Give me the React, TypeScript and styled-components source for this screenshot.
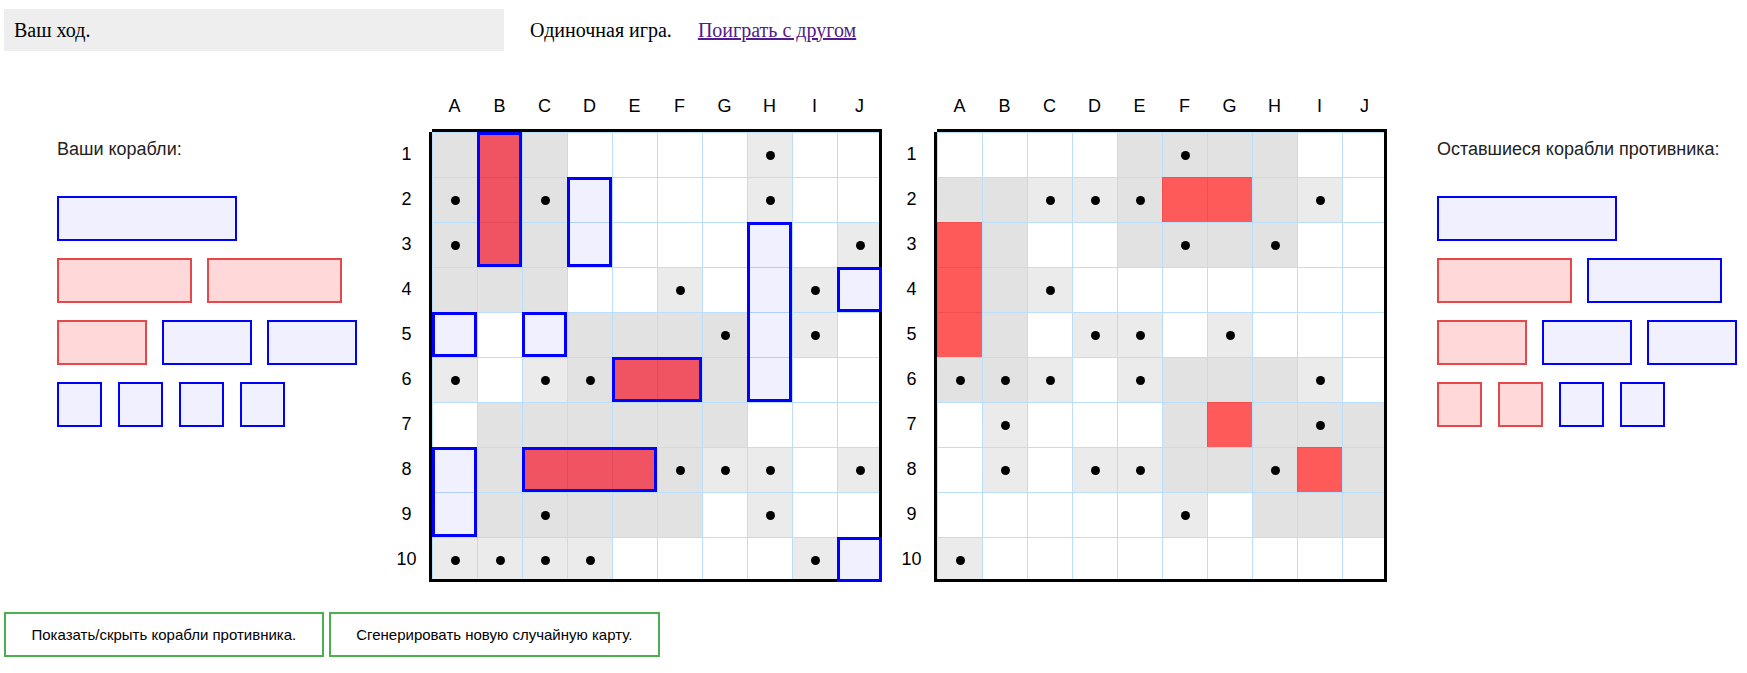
import React from 'react';
import styled, { createGlobalStyle } from 'styled-components';

const GlobalStyle = createGlobalStyle`
  html, body { margin: 0; padding: 0; background: #fff; }
  body { font-family: "Liberation Sans", Arial, sans-serif; color: #000; }
`;

const CELL = 45;
const LETTERS = ['A', 'B', 'C', 'D', 'E', 'F', 'G', 'H', 'I', 'J'];

type ShipDef = { c: number; r: number; len: number; vertical?: boolean };

// '.' empty, 'd' shaded (around sunk ship), 'D' shaded + shot, 'o' missed shot, 'x' hit
const myField = [
  'dxd....o..',
  'DxD....o..',
  'Dxd......o',
  'ddd..o..o.',
  '...dddD.o.',
  'o.oDxxd...',
  '.dddddd...',
  '.dxxxDoo.o',
  '.dDddd.o..',
  'oooo....o.',
];

const enemyField = [
  '....dDdd..',
  'ddooDxxdo.',
  'xd..dDdD..',
  'xdo.......',
  'xd.oo.o...',
  'DDo.odddo.',
  '.o...dxdDd',
  '.o.ooddDxd',
  '.....o.ddd',
  'o.........',
];

const myShips: ShipDef[] = [
  { c: 1, r: 0, len: 3, vertical: true },
  { c: 3, r: 1, len: 2, vertical: true },
  { c: 7, r: 2, len: 4, vertical: true },
  { c: 9, r: 3, len: 1 },
  { c: 0, r: 4, len: 1 },
  { c: 2, r: 4, len: 1 },
  { c: 4, r: 5, len: 2 },
  { c: 0, r: 7, len: 2, vertical: true },
  { c: 2, r: 7, len: 3 },
  { c: 9, r: 9, len: 1 },
];

type Fleet = { len: number; sunk: boolean }[][];

const myFleet: Fleet = [
  [{ len: 4, sunk: false }],
  [{ len: 3, sunk: true }, { len: 3, sunk: true }],
  [{ len: 2, sunk: true }, { len: 2, sunk: false }, { len: 2, sunk: false }],
  [{ len: 1, sunk: false }, { len: 1, sunk: false }, { len: 1, sunk: false }, { len: 1, sunk: false }],
];

const enemyFleet: Fleet = [
  [{ len: 4, sunk: false }],
  [{ len: 3, sunk: true }, { len: 3, sunk: false }],
  [{ len: 2, sunk: true }, { len: 2, sunk: false }, { len: 2, sunk: false }],
  [{ len: 1, sunk: true }, { len: 1, sunk: true }, { len: 1, sunk: false }, { len: 1, sunk: false }],
];

const Page = styled.div`
  padding: 9px 0 0 4px;
`;

const Header = styled.div`
  display: flex;
  align-items: center;
  gap: 26px;
  font-family: "Liberation Serif", "Times New Roman", serif;
  font-size: 20px;
`;

const Status = styled.div`
  width: 500px;
  height: 42px;
  box-sizing: border-box;
  padding-left: 10px;
  background: #eeeeee;
  display: flex;
  align-items: center;
`;

const Mode = styled.span`
  color: #000;
`;

const FriendLink = styled.a`
  color: #551a8b;
  text-decoration: underline;
  cursor: pointer;
`;

const Main = styled.div`
  display: flex;
  align-items: flex-start;
  margin-top: 33px;
`;

const SidePanel = styled.div<{ $ml: number; $w: number }>`
  margin-left: ${(p) => p.$ml}px;
  width: ${(p) => p.$w}px;
  flex: none;
  padding-top: 55px;
`;

const PanelTitle = styled.div`
  font-size: 18px;
  color: #222;
  margin-bottom: 36px;
`;

const FleetRow = styled.div<{ $gap: number }>`
  display: flex;
  gap: ${(p) => p.$gap}px;
  margin-bottom: 17px;
`;

const FleetShip = styled.div<{ $len: number; $sunk: boolean }>`
  box-sizing: border-box;
  width: ${(p) => p.$len * CELL}px;
  height: 45px;
  border: 2px solid ${(p) => (p.$sunk ? '#e54848' : '#0000ff')};
  background: ${(p) => (p.$sunk ? '#ffd9d9' : '#f0f0ff')};
`;

const Board = styled.div<{ $ml: number }>`
  margin-left: ${(p) => p.$ml}px;
  width: 498px;
  flex: none;
`;

const LetterRow = styled.div`
  display: flex;
  padding-left: 48px;
  margin-bottom: 3px;
`;

const AxisLabel = styled.div`
  width: 45px;
  height: 45px;
  display: flex;
  align-items: center;
  justify-content: center;
  font-size: 18px;
  color: #000;
`;

const BoardBody = styled.div`
  display: flex;
`;

const NumberCol = styled.div`
  width: 45px;
  margin-right: 3px;
`;

const Field = styled.div`
  position: relative;
  width: 450px;
  height: 450px;
  display: grid;
  grid-template-columns: repeat(10, 45px);
  grid-template-rows: repeat(10, 45px);

  &::before {
    content: '';
    position: absolute;
    left: -3px;
    top: 0;
    bottom: 0;
    width: 3px;
    background: #000;
    z-index: 1;
  }

  &::after {
    content: '';
    position: absolute;
    left: 0;
    right: 0;
    top: -3px;
    bottom: 0;
    border: 3px solid #000;
    border-left: none;
    z-index: 1;
    pointer-events: none;
  }
`;

const cellBg: Record<string, string> = {
  '.': '#ffffff',
  d: '#e2e2e2',
  D: '#e2e2e2',
  o: '#ebebeb',
  x: '#ff5a5a',
};

const Cell = styled.div<{ $kind: string }>`
  box-sizing: border-box;
  border-left: 1px solid ${(p) => (p.$kind === 'x' ? '#f24e4e' : '#bbdefb')};
  border-top: 1px solid ${(p) => (p.$kind === 'x' ? '#f24e4e' : '#bbdefb')};
  background: ${(p) => cellBg[p.$kind]};
  display: flex;
  align-items: center;
  justify-content: center;
`;

const Dot = styled.span`
  width: 9px;
  height: 9px;
  border-radius: 50%;
  background: #000;
`;

const ShipOutline = styled.div<{ $c: number; $r: number; $w: number; $h: number }>`
  position: absolute;
  left: ${(p) => p.$c * CELL}px;
  top: ${(p) => p.$r * CELL}px;
  width: ${(p) => p.$w * CELL}px;
  height: ${(p) => p.$h * CELL}px;
  box-sizing: border-box;
  border: 3px solid #0000ff;
  background: rgba(0, 0, 255, 0.06);
  z-index: 2;
`;

const Actions = styled.div`
  display: flex;
  gap: 5px;
  margin-top: 30px;
`;

const ActionButton = styled.button`
  height: 45px;
  padding: 0 25.5px;
  border: 2px solid #4caf50;
  background: #fff;
  font-family: "Liberation Sans", Arial, sans-serif;
  font-size: 15px;
  color: #000;
  cursor: pointer;
`;

function FleetPanel({ title, fleet, ml, w }: { title: string; fleet: Fleet; ml: number; w: number }) {
  return (
    <SidePanel $ml={ml} $w={w}>
      <PanelTitle>{title}</PanelTitle>
      {fleet.map((row, i) => (
        <FleetRow key={i} $gap={row[0].len === 1 ? 16 : 15}>
          {row.map((s, j) => (
            <FleetShip key={j} $len={s.len} $sunk={s.sunk} />
          ))}
        </FleetRow>
      ))}
    </SidePanel>
  );
}

function GameBoard({ field, ships, ml }: { field: string[]; ships: ShipDef[]; ml: number }) {
  return (
    <Board $ml={ml}>
      <LetterRow>
        {LETTERS.map((l) => (
          <AxisLabel key={l}>{l}</AxisLabel>
        ))}
      </LetterRow>
      <BoardBody>
        <NumberCol>
          {field.map((_, i) => (
            <AxisLabel key={i}>{i + 1}</AxisLabel>
          ))}
        </NumberCol>
        <Field>
          {field.map((row, r) =>
            row.split('').map((k, c) => (
              <Cell key={`${r}-${c}`} $kind={k}>
                {(k === 'D' || k === 'o') && <Dot />}
              </Cell>
            ))
          )}
          {ships.map((s, i) => (
            <ShipOutline
              key={i}
              $c={s.c}
              $r={s.r}
              $w={s.vertical ? 1 : s.len}
              $h={s.vertical ? s.len : 1}
            />
          ))}
        </Field>
      </BoardBody>
    </Board>
  );
}

export default function App() {
  return (
    <Page>
      <GlobalStyle />
      <Header>
        <Status>Ваш ход.</Status>
        <Mode>Одиночная игра.</Mode>
        <FriendLink>Поиграть с другом</FriendLink>
      </Header>
      <Main>
        <FleetPanel title="Ваши корабли:" fleet={myFleet} ml={53} w={327} />
        <GameBoard field={myField} ships={myShips} ml={0} />
        <GameBoard field={enemyField} ships={[]} ml={7} />
        <FleetPanel title="Оставшиеся корабли противника:" fleet={enemyFleet} ml={50} w={300} />
      </Main>
      <Actions>
        <ActionButton>Показать/скрыть корабли противника.</ActionButton>
        <ActionButton>Сгенерировать новую случайную карту.</ActionButton>
      </Actions>
    </Page>
  );
}
